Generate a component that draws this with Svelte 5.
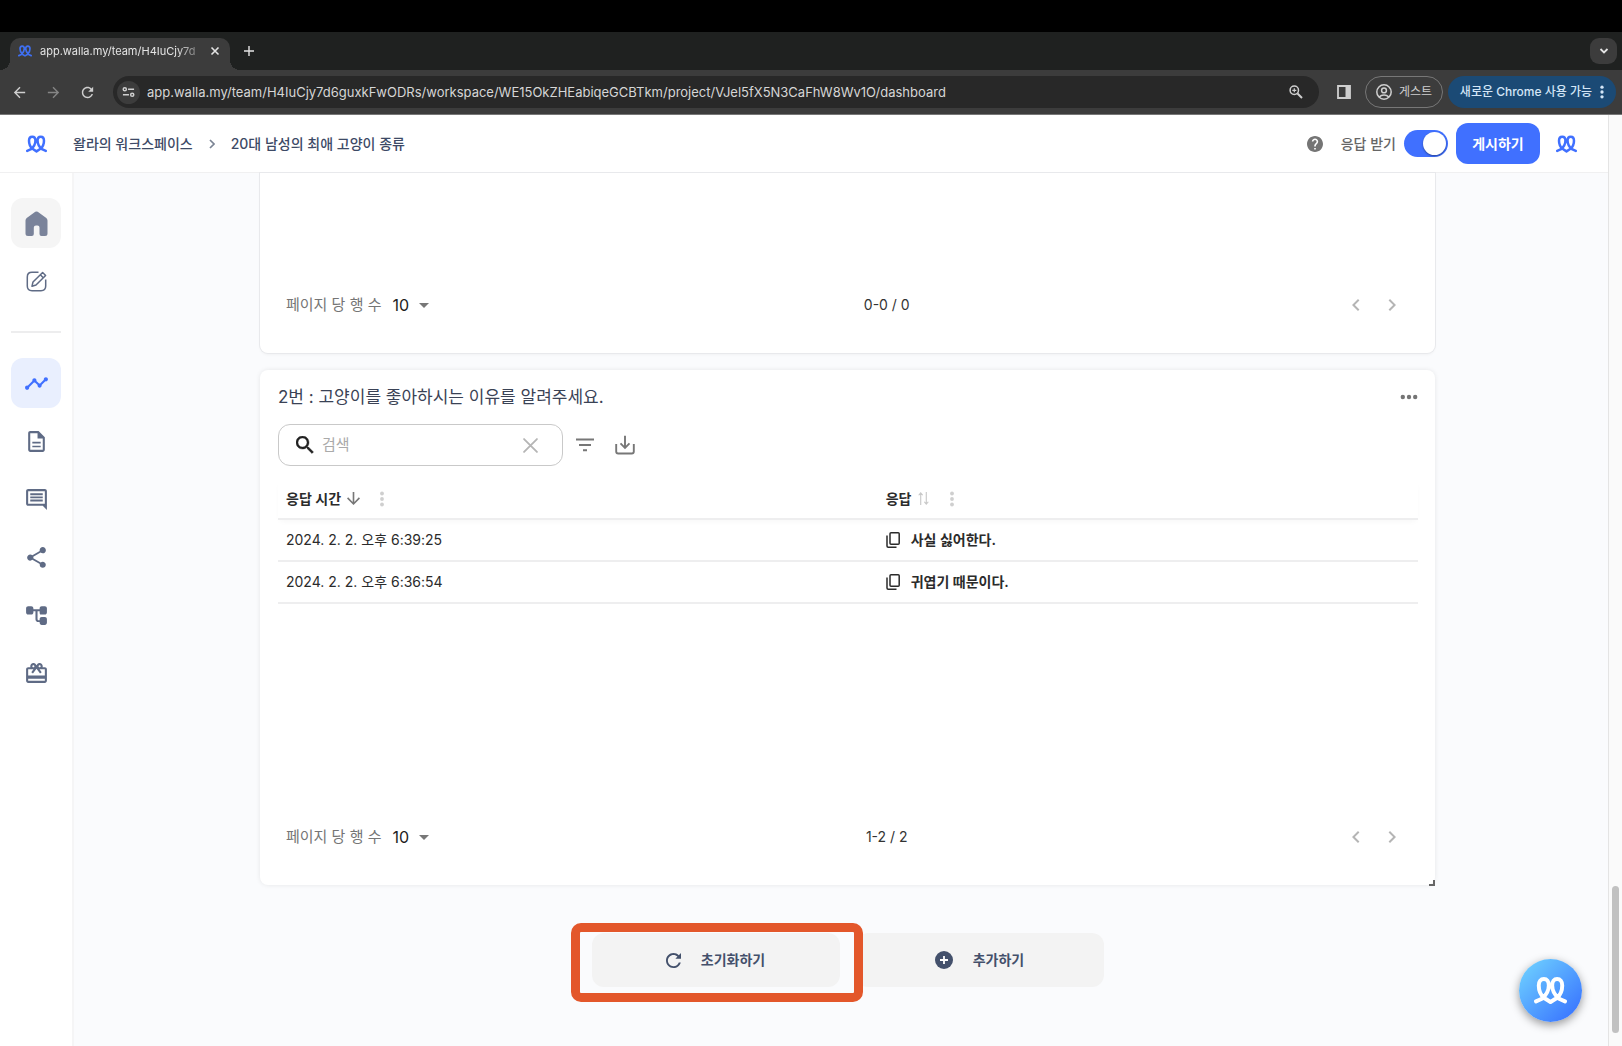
<script>
  const side = [
    { name: '대시보드', active: true, d: 'M23 8c0 1.1-.9 2-2 2-.18 0-.35-.02-.51-.07l-3.56 3.55c.05.16.07.34.07.52 0 1.1-.9 2-2 2s-2-.9-2-2c0-.18.02-.36.07-.52l-2.55-2.55c-.16.05-.34.07-.52.07s-.36-.02-.52-.07l-4.55 4.56c.05.16.07.33.07.51 0 1.1-.9 2-2 2s-2-.9-2-2 .9-2 2-2c.18 0 .35.02.51.07l4.56-4.55C8.02 9.36 8 9.18 8 9c0-1.1.9-2 2-2s2 .9 2 2c0 .18-.02.36-.07.52l2.55 2.55c.16-.05.34-.07.52-.07s.36.02.52.07l3.55-3.56C19.02 8.35 19 8.18 19 8c0-1.1.9-2 2-2s2 .9 2 2z' },
    { name: '응답', d: 'M8 16h8v1.500H8zm0-3.700h8v1.500H8zM14 2H6c-1.100 0-2 .9-2 2v16c0 1.100.9 2 2 2h12c1.100 0 2-.9 2-2V8zm4 18H6V4h7v5h5z' },
    { name: '댓글', d: 'M21.990 4c0-1.100-.89-2-1.990-2H4c-1.100 0-2 .9-2 2v12c0 1.100.9 2 2 2h14l4 4zM20 4v12H4V4zM6 12h12v1.800H6zm0-3h12v1.800H6zm0-3h12v1.800H6z' },
    { name: '공유', d: 'M18 16.080c-.76 0-1.440.3-1.960.77L8.910 12.700c.05-.23.09-.46.09-.7s-.04-.47-.09-.7l7.050-4.110c.54.5 1.250.81 2.040.81 1.660 0 3-1.340 3-3s-1.340-3-3-3-3 1.340-3 3c0 .24.04.47.09.7L8.040 9.810C7.500 9.310 6.790 9 6 9c-1.660 0-3 1.340-3 3s1.340 3 3 3c.79 0 1.500-.31 2.040-.81l7.120 4.160c-.05.21-.08.43-.08.65 0 1.610 1.310 2.920 2.920 2.920s2.920-1.310 2.920-2.920-1.310-2.920-2.920-2.920z' },
    { name: '로직', d: 'M16 11h4c1.100 0 2-.9 2-2V5c0-1.100-.9-2-2-2h-3c-1.100 0-2 .9-2 2v1H9V5c0-1.100-.9-2-2-2H4c-1.100 0-2 .9-2 2v4c0 1.100.9 2 2 2h3c1.100 0 2-.9 2-2V8h2v7.500c0 1.700 1.300 2.800 2.500 2.800H15V19c0 1.100.9 2 2 2h3c1.100 0 2-.9 2-2v-3.500c0-1.100-.9-2-2-2h-3c-1.100 0-2 .9-2 2v1h-1.300c-.4 0-.7-.4-.7-.8V8h2v1c0 1.100.4 2 1 2z' },
    { name: '리워드', d: 'M20 6h-2.180c.11-.31.18-.65.18-1 0-1.660-1.340-3-3-3-1.050 0-1.960.54-2.500 1.350l-.5.67-.5-.68C10.960 2.540 10.050 2 9 2 7.340 2 6 3.340 6 5c0 .35.07.69.18 1H4c-1.110 0-1.990.89-1.990 2L2 19c0 1.110.89 2 2 2h16c1.110 0 2-.89 2-2V8c0-1.110-.89-2-2-2zm-5-2c.55 0 1 .45 1 1s-.45 1-1 1-1-.45-1-1 .45-1 1-1zM9 4c.55 0 1 .45 1 1s-.45 1-1 1-1-.45-1-1 .45-1 1-1zm11 15H4v-2h16zm0-5H4V8h5.080L7 10.830 8.620 12 12 7.400l3.380 4.600L17 10.830 14.920 8H20z' }
  ];
  const rows = [
    { time: '2024. 2. 2. 오후 6:39:25', text: '사실 싫어한다.' },
    { time: '2024. 2. 2. 오후 6:36:54', text: '귀엽기 때문이다.' }
  ];
  let query = $state('');
  let accepting = $state(true);
</script>

{#snippet logo(cls)}
  <svg class={cls} viewBox="0 0 33.4 27.4" fill="none" stroke="currentColor" stroke-width="4" stroke-linecap="round" stroke-linejoin="round" aria-hidden="true">
    <path d="M2 24.700L8 22C12 18.500 15 13.500 15 8.500C15 4.500 13 2 10 2C6.800 2 4.800 4.500 4.800 8.500C4.800 13.500 7 18.500 10.300 21.300L16.700 25.400L23.100 21.300C26.400 18.500 28.600 13.500 28.600 8.500C28.600 4.500 26.600 2 23.400 2C20.400 2 18.400 4.500 18.400 8.500C18.400 13.500 21.400 18.500 25.400 22L31.400 24.700" />
  </svg>
{/snippet}

{#snippet dots()}
  <svg class="dots" viewBox="0 0 4 16" fill="currentColor" aria-hidden="true"><circle cx="2" cy="2.500" r="1.900" /><circle cx="2" cy="8" r="1.900" /><circle cx="2" cy="13.500" r="1.900" /></svg>
{/snippet}

{#snippet pager(id, range)}
  <div class="pager">
    <div class="per-page">
      <label for={id}>페이지 당 행 수</label>
      <span class="select-wrap">
        <select {id}><option>10</option><option>20</option><option>50</option></select>
        <svg viewBox="0 0 10 5" aria-hidden="true"><path d="M0 0h10L5 5z" fill="#777" /></svg>
      </span>
    </div>
    <span class="range">{range}</span>
    <div class="steps">
      <button aria-label="이전 페이지"><svg viewBox="0 0 24 24"><path d="M15.410 7.410 14 6l-6 6 6 6 1.410-1.410L10.830 12z" fill="currentColor" /></svg></button>
      <button aria-label="다음 페이지"><svg viewBox="0 0 24 24"><path d="M8.590 16.590 10 18l6-6-6-6-1.410 1.410L13.170 12z" fill="currentColor" /></svg></button>
    </div>
  </div>
{/snippet}

<div class="screen">
  <div class="tabs">
    <div class="tab">
      {@render logo('tab-logo')}
      <span class="tab-title">app.walla.my/team/H4IuCjy7d</span>
      <button class="tab-close" aria-label="탭 닫기"><svg viewBox="0 0 10 10"><path d="M1.500 1.500l7 7m0-7l-7 7" stroke="currentColor" stroke-width="1.600" /></svg></button>
    </div>
    <button class="new-tab" aria-label="새 탭"><svg viewBox="0 0 12 12"><path d="M6 1v10M1 6h10" stroke="currentColor" stroke-width="1.400" /></svg></button>
    <button class="tab-menu" aria-label="탭 검색"><svg viewBox="0 0 10 10"><path d="M1.500 3l3.500 3.500L8.500 3" fill="none" stroke="currentColor" stroke-width="1.800" /></svg></button>
  </div>

  <div class="toolbar">
    <div class="nav-buttons">
      <button aria-label="뒤로"><svg viewBox="0 0 24 24"><path d="M20 11H7.830l5.590-5.590L12 4l-8 8 8 8 1.410-1.410L7.830 13H20z" fill="currentColor" /></svg></button>
      <button class="dim" aria-label="앞으로"><svg viewBox="0 0 24 24"><path d="m12 4-1.410 1.410L16.170 11H4v2h12.170l-5.580 5.590L12 20l8-8z" fill="currentColor" /></svg></button>
      <button aria-label="새로고침"><svg viewBox="0 0 24 24"><path d="M17.650 6.350C16.200 4.900 14.210 4 12 4c-4.420 0-7.990 3.580-7.990 8s3.570 8 7.990 8c3.730 0 6.840-2.550 7.730-6h-2.080c-.82 2.330-3.040 4-5.650 4-3.310 0-6-2.690-6-6s2.690-6 6-6c1.660 0 3.140.69 4.220 1.780L13 11h7V4z" fill="currentColor" /></svg></button>
    </div>
    <div class="omnibox">
      <button class="site-info" aria-label="사이트 정보"><svg viewBox="0 0 14 12" fill="none" stroke="currentColor" stroke-width="1.600"><circle cx="3" cy="3" r="1.700" /><path d="M6.500 3H13M1 9h6.500" /><circle cx="11" cy="9" r="1.700" /></svg></button>
      <input class="url" aria-label="주소" value="app.walla.my/team/H4IuCjy7d6guxkFwODRs/workspace/WE15OkZHEabiqeGCBTkm/project/VJel5fX5N3CaFhW8Wv1O/dashboard" />
      <button class="zoom" aria-label="확대"><svg viewBox="0 0 14 14" fill="none" stroke="currentColor"><circle cx="5.300" cy="5.300" r="4.200" stroke-width="1.500" /><path d="M8.500 8.500 13 13" stroke-width="1.900" /><path d="M5.300 3.300v4M3.300 5.300h4" stroke-width="1.200" /></svg></button>
    </div>
    <button class="panel" aria-label="측면 패널"><svg viewBox="0 0 14 14"><path d="M1 1h12v12H1z" fill="none" stroke="currentColor" stroke-width="1.800" /><path d="M8.500 1H13v12H8.500z" fill="currentColor" /></svg></button>
    <button class="guest"><svg viewBox="0 0 16 16" fill="none" stroke="currentColor" stroke-width="1.500"><circle cx="8" cy="8" r="7.200" /><circle cx="8" cy="6.400" r="2.400" /><path d="M3.200 13c2.500-2.800 7.100-2.800 9.600 0" /></svg>게스트</button>
    <button class="update">새로운 Chrome 사용 가능 {@render dots()}</button>
  </div>

  <div class="app">
    <div class="page">
      <header>
        <a href="#home" class="brand" aria-label="Walla">{@render logo('logo')}</a>
        <nav class="crumbs" aria-label="경로">
          <a href="#workspace">왈라의 워크스페이스</a>
          <svg viewBox="0 0 6 10" aria-hidden="true"><path d="M1 1l4 4-4 4" fill="none" stroke="#7b8494" stroke-width="1.700" /></svg>
          <a href="#project">20대 남성의 최애 고양이 종류</a>
        </nav>
        <button class="help" aria-label="도움말"><svg viewBox="2 2 20 20"><path d="M12 2C6.480 2 2 6.480 2 12s4.480 10 10 10 10-4.480 10-10S17.520 2 12 2zm1 17h-2v-2h2zm2.070-7.750-.9.92C13.450 12.900 13 13.500 13 15h-2v-.5c0-1.100.45-2.100 1.170-2.830l1.240-1.260c.37-.36.59-.86.59-1.410 0-1.100-.9-2-2-2s-2 .9-2 2H8c0-2.210 1.790-4 4-4s4 1.790 4 4c0 .88-.36 1.680-.93 2.250z" fill="currentColor" /></svg></button>
        <label class="accept">응답 받기<input type="checkbox" role="switch" bind:checked={accepting} /></label>
        <button class="publish">게시하기</button>
        <a href="#account" class="account" aria-label="계정">{@render logo('logo')}</a>
      </header>

      <div class="body">
        <aside>
          <a href="#home" class="item home" aria-label="홈"><svg viewBox="0 0 22 25"><path d="M9.800.8Q11 0 12.200.8L20.800 7Q22 8 22 9.500V22.500Q22 25 19.500 25H16Q14 25 14 23V16.500Q14 14.500 12 14.500H10.500Q8.300 14.500 8.300 16.500V23Q8.300 25 6.300 25H2.500Q0 25 0 22.500V9.500Q0 8 1.200 7Z" fill="currentColor" /></svg></a>
          <a href="#edit" class="item edit" aria-label="편집"><svg viewBox="0 0 21 21" fill="none" stroke="currentColor" stroke-width="1.500" stroke-linejoin="round"><path d="M12.500 1.300H6Q1.300 1.300 1.300 6V15Q1.300 19.700 6 19.700H15Q19.700 19.700 19.700 15V8.500" /><path d="M6 15.200 7 11 16.600 1.500 19.600 4.500 10 14Z" /><path d="M14.300 3.800l3 3" /></svg></a>
          <hr />
          {#each side as item}
            <a href="#menu" class="item" class:active={item.active} aria-label={item.name}><svg viewBox="0 0 24 24"><path d={item.d} fill="currentColor" fill-rule="evenodd" /></svg></a>
          {/each}
        </aside>

        <main>
          <section class="card first">{@render pager('rows-1', '0-0 / 0')}</section>

          <section class="card second">
            <div class="card-head">
              <h2>2번 : 고양이를 좋아하시는 이유를 알려주세요.</h2>
              <button class="more" aria-label="더 보기"><svg viewBox="0 0 18 6" fill="currentColor"><circle cx="2.800" cy="3" r="2.200" /><circle cx="9" cy="3" r="2.200" /><circle cx="15.200" cy="3" r="2.200" /></svg></button>
            </div>
            <div class="tools">
              <div class="search">
                <svg class="glass" viewBox="3 3 18 18"><path d="M15.500 14h-.79l-.28-.27C15.410 12.590 16 11.110 16 9.500 16 5.910 13.090 3 9.500 3S3 5.910 3 9.500 5.910 16 9.500 16c1.610 0 3.090-.59 4.230-1.570l.27.28v.79l5 4.990L20.490 19zm-6 0C7.010 14 5 11.990 5 9.500S7.010 5 9.500 5 14 7.010 14 9.500 11.990 14 9.500 14z" fill="#222" stroke="#222" stroke-width=".4" /></svg>
                <input type="text" placeholder="검색" aria-label="검색" bind:value={query} />
                <button aria-label="지우기" onclick={() => (query = '')}><svg viewBox="0 0 14 14"><path d="M1 1l12 12M13 1L1 13" stroke="#b5b5b5" stroke-width="1.700" stroke-linecap="round" /></svg></button>
              </div>
              <button class="tool" aria-label="필터"><svg viewBox="0 0 20 20"><path d="M1 4.500h18M4 10h12M8 15.300h4" stroke="currentColor" stroke-width="2" /></svg></button>
              <button class="tool" aria-label="내려받기"><svg viewBox="0 0 20 20" fill="none" stroke="currentColor" stroke-width="1.900"><path d="M1.200 9v7.500Q1.200 18.500 3.200 18.500H16.800Q18.800 18.500 18.800 16.500V9M10 .8v11.500M5.500 8.300l4.500 4.500 4.500-4.500" /></svg></button>
            </div>
            <table>
              <thead>
                <tr>
                  <th class="time"><div class="cell">응답 시간<svg class="sort" viewBox="4 4 16 16"><path d="m20 12-1.410-1.410L13 16.170V4h-2v12.170l-5.580-5.590L4 12l8 8z" fill="#777" /></svg>{@render dots()}</div></th>
                  <th><div class="cell">응답<svg class="sort" viewBox="0 0 12 14" fill="none" stroke="#c8c8c8" stroke-width="1.200"><path d="M3 14V1M.8 3.500 3 1l2.200 2.500M9 0v13M6.800 10.500 9 13l2.200-2.500" /></svg>{@render dots()}</div></th>
                </tr>
              </thead>
              <tbody>
                {#each rows as row}
                  <tr>
                    <td>{row.time}</td>
                    <td><div class="cell answer"><svg viewBox="0 0 14 16" fill="none" stroke="currentColor" stroke-width="1.500"><rect x="4" y=".8" width="9.200" height="11.400" rx="1" /><path d="M1 3.500V14Q1 15.200 2.200 15.200H10.500" /></svg>{row.text}</div></td>
                  </tr>
                {/each}
              </tbody>
            </table>
            {@render pager('rows-2', '1-2 / 2')}
            <span class="resize"></span>
          </section>

          <div class="actions">
            <div class="marked">
              <button><svg class="reset" viewBox="4 4 16 16"><path d="M17.650 6.350C16.200 4.900 14.210 4 12 4c-4.420 0-7.990 3.580-7.990 8s3.570 8 7.990 8c3.730 0 6.840-2.550 7.730-6h-2.080c-.82 2.330-3.040 4-5.650 4-3.310 0-6-2.690-6-6s2.690-6 6-6c1.660 0 3.140.69 4.220 1.780L14 10h6V4z" fill="currentColor" /></svg>초기화하기</button>
              <span class="frame"></span>
            </div>
            <button><svg class="plus" viewBox="0 0 18 18"><circle cx="9" cy="9" r="9" fill="currentColor" /><path d="M9 5v8M5 9h8" stroke="#fff" stroke-width="1.800" /></svg>추가하기</button>
          </div>
        </main>
      </div>
    </div>
    <div class="gutter"><div class="thumb"></div></div>
  </div>
  <button class="chat" aria-label="채팅 상담">{@render logo('chat-logo')}</button>
</div>

<style>
  :global(body) { background: #fff; }
  .screen, .screen * { box-sizing: border-box; }
  .screen {
    display: flex; flex-direction: column; min-height: 100vh;
    font-family: Inter, "Noto Sans CJK KR", sans-serif; font-size: 14px; line-height: 20px; color: #333;
    border-top: 32px solid #000;
  }
  svg { display: block; flex: none; }
  button { font: inherit; color: inherit; background: none; border: 0; padding: 0; cursor: pointer; display: flex; align-items: center; justify-content: center; }
  input, select { font: inherit; color: inherit; border: 0; background: none; padding: 0; margin: 0; outline: 0; }
  a { color: inherit; text-decoration: none; }

  .tabs { display: flex; align-items: flex-end; height: 38px; background: #1f2120; padding: 0 5px 0 10px; color: #e4e4e4; }
  .tab { position: relative; display: flex; align-items: center; width: 220px; height: 32px; padding: 0 9px 6px 8px; background: #3c3c3c; border-radius: 10px 10px 0 0; font-size: 11px; }
  .tab::before, .tab::after { content: ""; position: absolute; bottom: 0; width: 10px; height: 10px; }
  .tab::before { right: 100%; background: radial-gradient(circle at 0 0, transparent 10px, #3c3c3c 10px); }
  .tab::after { left: 100%; background: radial-gradient(circle at 100% 0, transparent 10px, #3c3c3c 10px); }
  .screen :global(.tab-logo) { width: 14px; height: 12px; color: #3f6ff0; }
  .tab-title { flex: 1; margin: 0 8px; white-space: nowrap; mask-image: linear-gradient(90deg, #000 85%, #0003); }
  .tab-close svg { width: 10px; height: 10px; }
  .tab-close { width: 12px; height: 20px; }
  .new-tab { width: 38px; height: 38px; }
  .new-tab svg { width: 12px; height: 12px; }
  .tab-menu { margin: 0 0 6px auto; width: 27px; height: 26px; background: #3c3c3c; border-radius: 9px; }
  .tab-menu svg { width: 10px; height: 10px; }

  .toolbar { display: flex; align-items: center; height: 45px; padding: 0 6px 0 9px; background: #3c3c3c; border-bottom: 1px solid #777; color: #cfcfcf; }
  .nav-buttons { display: flex; gap: 14px; width: 104px; }
  .nav-buttons button { width: 20px; height: 20px; }
  .nav-buttons svg { width: 17px; height: 17px; }
  .nav-buttons .dim { color: #858585; }
  .omnibox { flex: 1; display: flex; align-items: center; height: 32px; padding: 0 16px 0 4px; border-radius: 16px; background: #282828; }
  .site-info { width: 23px; height: 23px; border-radius: 50%; background: #3c3c3c; }
  .site-info svg { width: 13px; height: 12px; }
  .url { flex: 1; min-width: 0; margin-left: 7px; height: 24px; color: #d6d6d6; font-size: 13px; }
  .zoom svg { width: 14px; height: 14px; }
  .panel { margin: 0 14px 0 18px; }
  .panel svg { width: 14px; height: 14px; }
  .guest { gap: 7px; width: 78px; height: 32px; margin-right: 5px; border: 1px solid #777; border-radius: 16px; font-size: 12px; }
  .guest svg { width: 16px; height: 16px; }
  .update { gap: 8px; width: 168px; height: 32px; border-radius: 16px; background: #1b4a75; color: #d4e6f7; font-size: 12px; font-weight: 500; white-space: nowrap; }
  .dots { width: 4px; height: 16px; }
  .update .dots { height: 14px; }

  .app { flex: 1; display: flex; }
  .page { flex: 1; min-width: 0; display: flex; flex-direction: column; }
  .gutter { display: flex; flex-direction: column; justify-content: flex-end; align-items: center; width: 14px; padding-bottom: 13px; background: #fafafa; border-left: 1px solid #e4e4e4; }
  .thumb { width: 7px; height: 16%; border-radius: 4px; background: #c1c1c1; }

  header { display: flex; align-items: center; height: 58px; padding: 0 31px 0 26px; border-bottom: 1px solid #f0f0f1; background: #fff; }
  .screen :global(.logo) { width: 21px; height: 18px; color: #4070ff; }
  .brand { width: 47px; }
  .crumbs { display: flex; align-items: center; color: #3d4a66; font-weight: 500; gap: 16px; white-space: nowrap; }
  .crumbs svg { width: 6px; height: 10px; }
  .help { margin: 0 18px 0 auto; color: #757575; }
  .help svg { width: 16px; height: 16px; }
  .accept { display: flex; align-items: center; gap: 8px; color: #666; font-weight: 500; white-space: nowrap; }
  .accept input { appearance: none; display: flex; width: 44px; height: 27px; padding: 2px; border-radius: 14px; background: #bbb; }
  .accept input::before { content: ""; width: 23px; height: 23px; border-radius: 50%; background: #fff; box-shadow: 0 1px 2px #0006; }
  .accept input:checked { background: #4070ff; justify-content: flex-end; }
  .publish { width: 84px; height: 41px; margin: 0 16px 0 8px; border-radius: 12px; background: #4070ff; color: #fff; font-weight: 600; }

  .body { flex: 1; display: flex; }
  aside { display: flex; flex-direction: column; align-items: center; gap: 8px; width: 74px; padding-top: 25px; border-right: 2px solid #f5f5f6; background: #fff; }
  .item { display: flex; align-items: center; justify-content: center; width: 50px; height: 50px; border-radius: 12px; color: #5f6b85; }
  .item svg { width: 25px; height: 25px; }
  .home { background: #f5f5f5; color: #7a839a; }
  .edit svg { width: 21px; height: 21px; }
  .active { background: #e9effe; color: #4070ff; }
  hr { width: 50px; height: 2px; margin: 17px 0; border: 0; background: #ededee; }

  main { flex: 1; min-width: 0; padding: 0 173px 40px 186px; background: #fafbfd; }
  .card { position: relative; display: flex; flex-direction: column; justify-content: flex-end; background: #fff; border-radius: 8px; padding: 0 17px 28px 18px; }
  .first { min-height: 180px; border-radius: 0 0 8px 8px; box-shadow: 0 0 0 1px #e8e9ec, 0 2px 3px #0000000a; }
  .second { min-height: 515px; margin-top: 17px; padding-top: 14px; box-shadow: 0 0 5px #00000016; }
  .card-head { display: flex; align-items: center; justify-content: space-between; height: 26px; }
  h2 { margin: 0; font-size: 17px; line-height: 26px; font-weight: 400; color: #3a4255; }
  .more svg { width: 18px; height: 6px; color: #757575; }
  .tools { display: flex; align-items: center; gap: 20px; margin-top: 14px; color: #777; }
  .search { display: flex; align-items: center; width: 285px; height: 42px; margin-right: -8px; padding: 0 24px 0 17px; border: 1px solid #c9c9c9; border-radius: 12px; }
  .glass { width: 18px; height: 18px; }
  .search input { flex: 1; min-width: 0; margin-left: 8px; font-size: 15px; color: #333; }
  .search input::placeholder { color: #aaa; opacity: 1; }
  .search button svg { width: 15px; height: 15px; }
  .tool svg { width: 20px; height: 20px; }

  table { width: 100%; margin: 13px 0 auto; border-collapse: collapse; table-layout: fixed; }
  th, td { height: 42px; padding: 0 8px; text-align: left; border-bottom: 2px solid #eeeeef; color: #2b2b2b; }
  thead { box-shadow: 0 4px 6px -2px #0000000a; }
  th { height: 40px; font-weight: 600; }
  .time { width: 600px; width: 52.6%; }
  .cell { display: flex; align-items: center; }
  .cell .dots { color: #cfcfcf; margin-left: 20px; }
  .sort { width: 13px; height: 13px; margin-left: 6px; }
  .answer { gap: 11px; font-weight: 600; }
  .answer svg { width: 14px; height: 16px; }

  .pager { display: flex; align-items: center; justify-content: space-between; height: 40px; padding: 0 14px 0 8px; }
  .per-page { display: flex; align-items: center; gap: 11px; font-size: 15px; color: #757575; }
  .select-wrap { display: flex; align-items: center; gap: 7px; }
  .select-wrap svg { width: 10px; height: 5px; }
  select { appearance: none; font-size: 16px; color: #222; }
  .range { color: #333; }
  .steps { display: flex; gap: 12px; color: #b5b5b5; }
  .steps svg { width: 24px; height: 24px; }
  .resize { position: absolute; right: 0; bottom: -1px; width: 6px; height: 6px; border: solid #666; border-width: 0 2px 2px 0; }

  .actions { display: flex; justify-content: center; gap: 16px; margin-top: 48px; }
  .actions button { gap: 20px; width: 248px; height: 54px; border-radius: 12px; background: #f3f3f3; color: #43506b; font-weight: 600; }
  .marked { position: relative; z-index: 1; }
  .frame { position: absolute; inset: -10px -23px -15px -21px; border: 9px solid #e3572b; border-radius: 10px; pointer-events: none; }
  .reset { width: 15px; height: 15px; }
  .plus { width: 18px; height: 18px; }

  .chat { position: fixed; right: 40px; bottom: 24px; width: 63px; height: 63px; border-radius: 50%; background: linear-gradient(135deg, #6cccff 10%, #3a76ff 90%); color: #fff; box-shadow: 0 3px 10px #0006; }
  .screen :global(.chat-logo) { width: 33px; height: 27px; }
</style>
